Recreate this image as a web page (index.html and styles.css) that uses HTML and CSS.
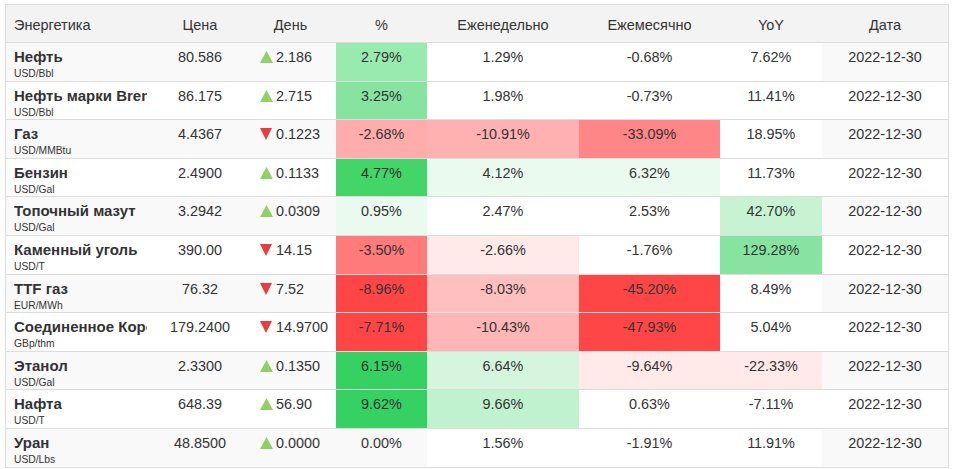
FILE: index.html
```html
<!DOCTYPE html>
<html lang="ru">
<head>
<meta charset="utf-8">
<title>Энергетика</title>
<link rel="stylesheet" href="styles.css">
</head>
<body>
<div class="wrap">
<table class="quotes">
<colgroup>
<col class="c-name"><col class="c-price"><col class="c-day"><col class="c-pct"><col class="c-week"><col class="c-month"><col class="c-yoy"><col class="c-date">
</colgroup>
<thead>
<tr><th class="left">Энергетика</th><th>Цена</th><th>День</th><th>%</th><th>Еженедельно</th><th>Ежемесячно</th><th>YoY</th><th>Дата</th></tr>
</thead>
<tbody>
<tr class="odd">
<td class="name"><div class="n">Нефть</div><div class="u">USD/Bbl</div></td>
<td class="num">80.586</td>
<td class="day"><svg class="tri" viewBox="0 0 13 12"><polygon class="up" points="0,12 6.5,0 13,12"/></svg>2.186</td>
<td class="num g2">2.79%</td><td class="num w">1.29%</td><td class="num w">-0.68%</td><td class="num w">7.62%</td><td class="num">2022-12-30</td>
</tr>
<tr>
<td class="name"><div class="n">Нефть марки Brent</div><div class="u">USD/Bbl</div></td>
<td class="num">86.175</td>
<td class="day"><svg class="tri" viewBox="0 0 13 12"><polygon class="up" points="0,12 6.5,0 13,12"/></svg>2.715</td>
<td class="num g3">3.25%</td><td class="num w">1.98%</td><td class="num w">-0.73%</td><td class="num w">11.41%</td><td class="num">2022-12-30</td>
</tr>
<tr class="odd">
<td class="name"><div class="n">Газ</div><div class="u">USD/MMBtu</div></td>
<td class="num">4.4367</td>
<td class="day"><svg class="tri" viewBox="0 0 13 12"><polygon class="down" points="0,0 12,0 6,12"/></svg>0.1223</td>
<td class="num r2">-2.68%</td><td class="num r3">-10.91%</td><td class="num r4">-33.09%</td><td class="num w">18.95%</td><td class="num">2022-12-30</td>
</tr>
<tr>
<td class="name"><div class="n">Бензин</div><div class="u">USD/Gal</div></td>
<td class="num">2.4900</td>
<td class="day"><svg class="tri" viewBox="0 0 13 12"><polygon class="up" points="0,12 6.5,0 13,12"/></svg>0.1133</td>
<td class="num g4">4.77%</td><td class="num g0">4.12%</td><td class="num g0">6.32%</td><td class="num w">11.73%</td><td class="num">2022-12-30</td>
</tr>
<tr class="odd">
<td class="name"><div class="n">Топочный мазут</div><div class="u">USD/Gal</div></td>
<td class="num">3.2942</td>
<td class="day"><svg class="tri" viewBox="0 0 13 12"><polygon class="up" points="0,12 6.5,0 13,12"/></svg>0.0309</td>
<td class="num g0">0.95%</td><td class="num w">2.47%</td><td class="num w">2.53%</td><td class="num g1b">42.70%</td><td class="num">2022-12-30</td>
</tr>
<tr>
<td class="name"><div class="n">Каменный уголь</div><div class="u">USD/T</div></td>
<td class="num">390.00</td>
<td class="day"><svg class="tri" viewBox="0 0 13 12"><polygon class="down" points="0,0 12,0 6,12"/></svg>14.15</td>
<td class="num r5">-3.50%</td><td class="num r0">-2.66%</td><td class="num w">-1.76%</td><td class="num g3">129.28%</td><td class="num">2022-12-30</td>
</tr>
<tr class="odd">
<td class="name"><div class="n">TTF газ</div><div class="u">EUR/MWh</div></td>
<td class="num">76.32</td>
<td class="day"><svg class="tri" viewBox="0 0 13 12"><polygon class="down" points="0,0 12,0 6,12"/></svg>7.52</td>
<td class="num r6">-8.96%</td><td class="num r1">-8.03%</td><td class="num r6">-45.20%</td><td class="num w">8.49%</td><td class="num">2022-12-30</td>
</tr>
<tr>
<td class="name"><div class="n">Соединенное Королевство</div><div class="u">GBp/thm</div></td>
<td class="num">179.2400</td>
<td class="day"><svg class="tri" viewBox="0 0 13 12"><polygon class="down" points="0,0 12,0 6,12"/></svg>14.9700</td>
<td class="num r6">-7.71%</td><td class="num r3b">-10.43%</td><td class="num r6">-47.93%</td><td class="num w">5.04%</td><td class="num">2022-12-30</td>
</tr>
<tr class="odd">
<td class="name"><div class="n">Этанол</div><div class="u">USD/Gal</div></td>
<td class="num">2.3300</td>
<td class="day"><svg class="tri" viewBox="0 0 13 12"><polygon class="up" points="0,12 6.5,0 13,12"/></svg>0.1350</td>
<td class="num g5">6.15%</td><td class="num g1">6.64%</td><td class="num r0">-9.64%</td><td class="num r0">-22.33%</td><td class="num">2022-12-30</td>
</tr>
<tr>
<td class="name"><div class="n">Нафта</div><div class="u">USD/T</div></td>
<td class="num">648.39</td>
<td class="day"><svg class="tri" viewBox="0 0 13 12"><polygon class="up" points="0,12 6.5,0 13,12"/></svg>56.90</td>
<td class="num g5">9.62%</td><td class="num g1c">9.66%</td><td class="num w">0.63%</td><td class="num w">-7.11%</td><td class="num">2022-12-30</td>
</tr>
<tr class="odd">
<td class="name"><div class="n">Уран</div><div class="u">USD/Lbs</div></td>
<td class="num">48.8500</td>
<td class="day"><svg class="tri" viewBox="0 0 13 12"><polygon class="up" points="0,12 6.5,0 13,12"/></svg>0.0000</td>
<td class="num">0.00%</td><td class="num w">1.56%</td><td class="num w">-1.91%</td><td class="num w">11.91%</td><td class="num">2022-12-30</td>
</tr>
</tbody>
</table>
</div>
</body>
</html>
```
FILE: styles.css
```css
html, body {
  margin: 0;
  padding: 0;
  background: #fff;
}
body {
  padding: 4px 0 0 5px;
  font-family: "Liberation Sans", Arial, sans-serif;
  color: #333;
}
.wrap {
  width: 942px;
  border: 1px solid #ddd;
  border-bottom: none;
}
.quotes {
  width: 942px;
  table-layout: fixed;
  border-collapse: separate;
  border-spacing: 0;
}
.c-name { width: 149px; }
.c-price { width: 90px; }
.c-day { width: 91px; }
.c-pct { width: 91px; }
.c-week { width: 152px; }
.c-month { width: 141px; }
.c-yoy { width: 102px; }
.c-date { width: 126px; }

.quotes th {
  background: #f3f3f3;
  font-weight: normal;
  font-size: 14.5px;
  line-height: 18px;
  height: 18px;
  padding: 11px 8px 8px;
  text-align: center;
  border-bottom: 1px solid #ddd;
  white-space: nowrap;
  overflow: hidden;
}
.quotes th.left { text-align: left; }

.quotes td {
  vertical-align: top;
  padding: 4px 8px 0;
  height: 33.6px;
  border-bottom: 1px solid #ddd;
  font-size: 14.4px;
  line-height: 20px;
  white-space: nowrap;
  overflow: hidden;
}
.quotes tr.odd td { background: #f9f9f9; }

.name .n {
  font-weight: bold;
  font-size: 15px;
  line-height: 20px;
  overflow: hidden;
}
.name .u {
  font-size: 10.3px;
  line-height: 13px;
}
.num { text-align: center; }
.day { padding-left: 15px !important; }
.tri {
  width: 13px;
  height: 12px;
  margin-right: 3px;
  vertical-align: -1px;
}
.up { fill: #8fd163; }
.down { fill: #ec3b3b; }

.quotes tr td.w { background: #fff; }
.quotes tr td.g0 { background: #eafaee; }
.quotes tr td.g1 { background: #d5f5de; }
.quotes tr td.g1b { background: #c8f3d3; }
.quotes tr td.g1c { background: #c1f2cf; }
.quotes tr td.g2 { background: #99eaaf; }
.quotes tr td.g3 { background: #86e4a0; }
.quotes tr td.g4 { background: #43d568; }
.quotes tr td.g5 { background: #35d263; }
.quotes tr td.r0 { background: #ffe9e9; }
.quotes tr td.r1 { background: #ffbfbf; }
.quotes tr td.r2 { background: #ffacac; }
.quotes tr td.r3 { background: #ffb1b1; }
.quotes tr td.r3b { background: #ffb6b6; }
.quotes tr td.r4 { background: #ff8686; }
.quotes tr td.r5 { background: #ff7b7b; }
.quotes tr td.r6 { background: #ff4646; }
```
